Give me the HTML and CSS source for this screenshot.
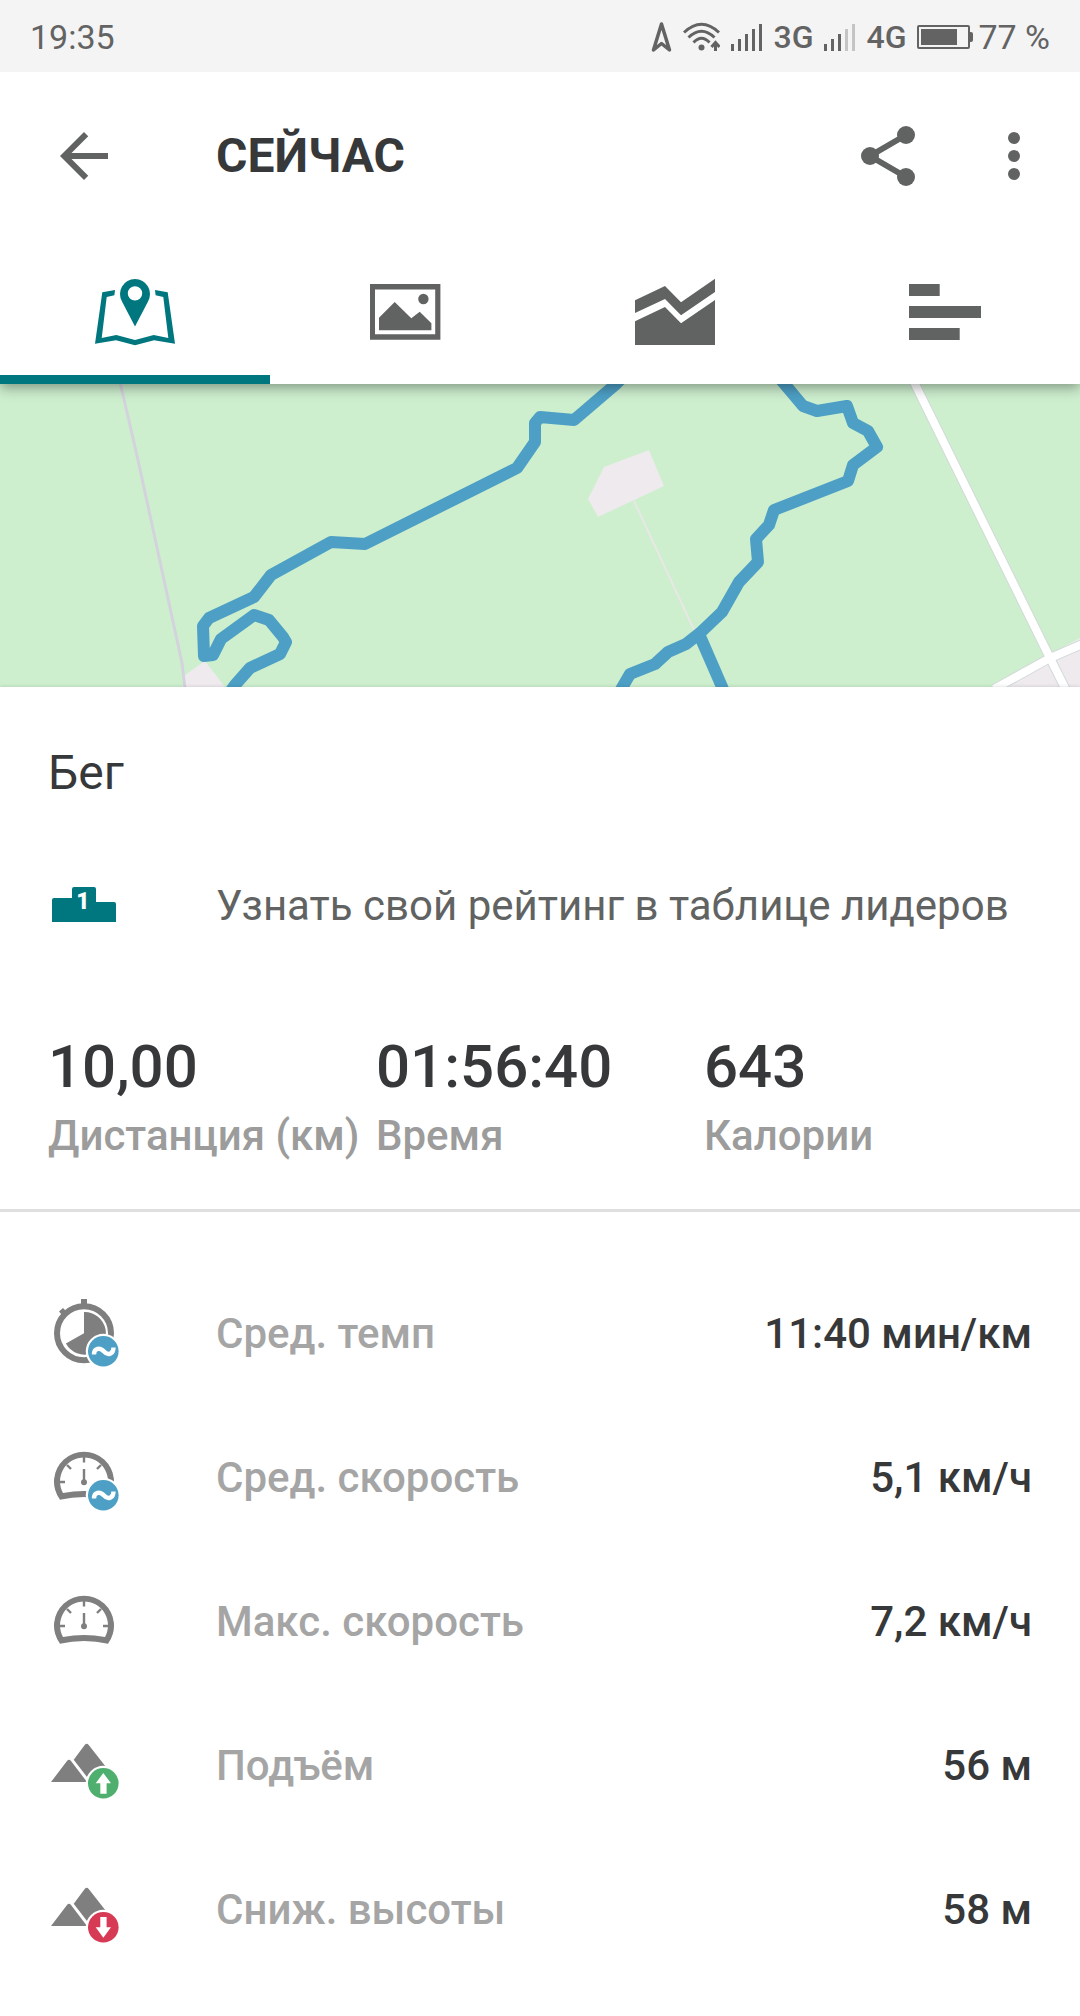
FILE: index.html
```html
<!DOCTYPE html>
<html lang="ru">
<head>
<meta charset="utf-8">
<meta name="viewport" content="width=device-width, initial-scale=1">
<title>Сейчас</title>
<link rel="stylesheet" href="styles.css">
</head>
<body>
<div class="status">
  <span class="status-text">19:35</span>
  <div class="status-icons">
    <svg width="21" height="32" viewBox="0 0 21 32" aria-hidden="true"><path d="M10.500 3L2.500 29 10.500 22.500 18.500 29Z" fill="none" stroke="currentColor" stroke-width="3.500" stroke-linejoin="round"/></svg>
    <svg width="37" height="30" viewBox="0 0 37 30" aria-hidden="true"><g fill="none" stroke="currentColor" stroke-width="3"><path d="M1 10.500Q18.500-6 36 10.500M5.500 15.500Q18.500 3 31.500 15.500M10.500 20.500Q18.500 12 26.500 20.500"/><path d="M32.500 29V21M28.500 25L32.500 20.500 36.500 25"/></g><circle cx="18.500" cy="25.500" r="3"/></svg>
    <svg width="31" height="28" viewBox="0 0 31 28" aria-hidden="true"><path d="M1.500 21V28M8.500 16V28M15.500 11V28M22.500 6V28M29.500 1V28" stroke="currentColor" stroke-width="3"/></svg>
    <span class="network">3G</span>
    <svg width="31" height="28" viewBox="0 0 31 28" aria-hidden="true"><path d="M1.500 21V28M8.500 16V28M15.500 11V28" stroke="currentColor" stroke-width="3"/><path d="M22.500 6V28M29.500 1V28" stroke="#c4c4c4" stroke-width="3"/></svg>
    <span class="network">4G</span>
    <div class="battery">
      <svg width="56" height="24" viewBox="0 0 56 24" aria-hidden="true"><rect x="1" y="1" width="51" height="22" rx="1" fill="none" stroke="currentColor" stroke-width="2"/><path d="M4 4H40V20H4ZM53 7H54Q56 7 56 9V15Q56 17 54 17H53Z"/></svg>
      <span class="status-text">77 %</span>
    </div>
  </div>
</div>

<header class="header">
  <div class="toolbar">
    <button class="icon-button" type="button" aria-label="Назад"><svg viewBox="0 0 24 24"><path d="M20 11H7.830L13.420 5.410 12 4 4 12 12 20 13.410 18.590 7.830 13H20Z"/></svg></button>
    <h1 class="title">СЕЙЧАС</h1>
    <button class="icon-button" type="button" aria-label="Поделиться"><svg viewBox="0 0 24 24"><path d="M18 5L6 12 18 19" fill="none" stroke="currentColor" stroke-width="2"/><circle cx="18" cy="5" r="3"/><circle cx="6" cy="12" r="3"/><circle cx="18" cy="19" r="3"/></svg></button>
    <button class="icon-button" type="button" aria-label="Ещё"><svg viewBox="0 0 24 24"><circle cx="12" cy="6" r="2"/><circle cx="12" cy="12" r="2"/><circle cx="12" cy="18" r="2"/></svg></button>
  </div>
  <nav class="tabs">
    <button class="tab tab-active" type="button" aria-label="Карта"><svg viewBox="0 0 96 96"><path d="M28 26L15.300 28.300 8 79.700 29 76.300 48 81.300 67 76.300 88 79.700 80.700 28.300 68 26 68.600 31.300 76.300 33 81.300 74 66.700 71 48 76 29.300 71 14.700 74 19.700 33 27.400 31.300Z"/><path fill-rule="evenodd" d="M48 62.500L35 37.500A15 15 0 1 1 61 37.500ZM48 22.200A7.200 7.200 0 1 0 48 36.600A7.200 7.200 0 1 0 48 22.200Z"/></svg></button>
    <button class="tab" type="button" aria-label="Фото"><svg viewBox="0 0 96 96"><path fill-rule="evenodd" d="M13 20H83.400V75.700H13ZM18 25.500V70.200H78.200V25.500Z"/><circle cx="66.400" cy="35" r="5.200"/><path d="M22 66.300V53.700L37.700 38 54.300 54.300 62.700 47.700 74.400 59.300V66.300Z"/></svg></button>
    <button class="tab" type="button" aria-label="Графики"><svg viewBox="0 0 96 96"><path d="M8 36.300L38 22 54 38.300 88 14.700V28L54 51.300 38 35 8 49Z"/><path d="M8 57.300L38 43 54 59.300 88 36V81H8Z"/></svg></button>
    <button class="tab" type="button" aria-label="Отрезки"><svg viewBox="0 0 96 96"><path d="M12 20H42.700V32H12ZM12 42H84V54H12ZM12 64H62.700V76H12Z"/></svg></button>
  </nav>
</header>

<main>
  <div class="map">
    <svg viewBox="0 0 1080 303" preserveAspectRatio="xMidYMid slice" role="img" aria-label="Маршрут тренировки">
      <path d="M0 0H1080V303H0Z" fill="#cdefce"/>
      <path d="M205 277L185 291 182 303H225Z" fill="#eeeaee"/>
      <path d="M120 -2L138 76 182 279 185 305" fill="none" stroke="#d4d3dd" stroke-width="3"/>
      <path d="M604 83L649 66 664 102 598 133 588 115Z" fill="#eeeaee"/>
      <path d="M634 117L695 248" stroke="#e8e8e4" stroke-width="2"/>
      <path d="M1050 270L1080 254V303H998Z" fill="#eeeaee"/>
      <g fill="none" stroke="#d3d9d9" stroke-width="10"><path d="M914 -2L1050 274 1066 306"/><path d="M1085 259L1050 274 994 305"/></g>
      <g fill="none" stroke="#fff" stroke-width="8"><path d="M914 -2L1050 274 1066 306"/><path d="M1085 259L1050 274 994 305"/></g>
      <g fill="none" stroke="#4d9fc5" stroke-width="12" stroke-linejoin="round">
        <path d="M622 -6L615 1 574 36 540 33 535 39V58L517 84 365 160 331 158 271 191 254 213 209 234 203 242 204 272 213 271 221 255 254 231 269 236 283 253 286 258 280 270 250 284 235 301 228 311"/>
        <path d="M777 -9L803 22 817 27 847 22 853 39 868 47 877 63 853 81 848 97 774 126 769 141 756 155 758 178 739 198 722 228 700 249 686 260 668 268 655 280 630 290 619 309"/>
        <path d="M699 250L726 312"/>
      </g>
    </svg>
  </div>

  <section class="summary">
    <h2 class="activity">Бег</h2>
    <a class="ranking" href="#leaderboard">
      <svg class="row-icon" viewBox="0 0 72 72" aria-hidden="true"><path d="M4 53V31Q4 29 6 29H24V20Q24 18 26 18H46Q48 18 48 20V33H66Q68 33 68 35V53Z" fill="#00767f"/><text x="35" y="40" text-anchor="middle" class="podium-digit">1</text></svg>
      <span>Узнать свой рейтинг в таблице лидеров</span>
    </a>
    <dl class="stats">
      <div class="stat"><dt>Дистанция (км)</dt><dd>10,00</dd></div>
      <div class="stat"><dt>Время</dt><dd>01:56:40</dd></div>
      <div class="stat"><dt>Калории</dt><dd>643</dd></div>
    </dl>
  </section>

  <dl class="details">
    <div class="detail">
      <dt><svg class="row-icon" viewBox="0 0 72 72" aria-hidden="true"><circle cx="36" cy="36.300" r="27" fill="none" stroke="currentColor" stroke-width="6"/><path d="M33 2H39V9H33ZM11 14.500L15 11 18 14 14 18ZM36 15A21.300 21.300 0 1 1 17.900 46.500L36 36.300Z"/><circle cx="55.300" cy="54.300" r="17.500" fill="#fff"/><circle cx="55.300" cy="54.300" r="15.300" fill="#4d9fc5"/><path d="M46 57.500C46 51 52 50 56 54.500S65.500 57 65.500 50.500" fill="none" stroke="#fff" stroke-width="4.400"/></svg>Сред. темп</dt>
      <dd>11:40 мин/км</dd>
    </div>
    <div class="detail">
      <dt><svg class="row-icon" viewBox="0 0 72 72" aria-hidden="true"><path fill-rule="evenodd" d="M12 58.700A30 30 0 1 1 60 58.700Q36 53.500 12 58.700ZM15 52Q36 48 57 52A24 24 0 1 0 15 52Z"/><path d="M36 16V21.500M11 41H17M55 41H61M19 24L23 28M53 24L49 28M36 28V41" fill="none" stroke="currentColor" stroke-width="2.400"/><circle cx="36" cy="41.300" r="3"/><circle cx="55.300" cy="54.300" r="17.500" fill="#fff"/><circle cx="55.300" cy="54.300" r="15.300" fill="#4d9fc5"/><path d="M46 57.500C46 51 52 50 56 54.500S65.500 57 65.500 50.500" fill="none" stroke="#fff" stroke-width="4.400"/></svg>Сред. скорость</dt>
      <dd>5,1 км/ч</dd>
    </div>
    <div class="detail">
      <dt><svg class="row-icon" viewBox="0 0 72 72" aria-hidden="true"><path fill-rule="evenodd" d="M12 58.700A30 30 0 1 1 60 58.700Q36 53.500 12 58.700ZM15 52Q36 48 57 52A24 24 0 1 0 15 52Z"/><path d="M36 16V21.500M11 41H17M55 41H61M19 24L23 28M53 24L49 28M36 28V41" fill="none" stroke="currentColor" stroke-width="2.400"/><circle cx="36" cy="41.300" r="3"/></svg>Макс. скорость</dt>
      <dd>7,2 км/ч</dd>
    </div>
    <div class="detail">
      <dt><svg class="row-icon" viewBox="0 0 72 72" aria-hidden="true"><path d="M3 53L19 32Q21 29.500 23 32L39 53ZM25.700 30.700L36.700 16Q38.700 13.300 40.700 16L58 38 39 48Z"/><circle cx="55.300" cy="54.300" r="17.500" fill="#fff"/><circle cx="55.300" cy="54.300" r="15.300" fill="#4faf6f"/><path d="M55.300 44L63 54.300H58.600V64.700H52.300V54.300H47.700Z" fill="#fff"/></svg>Подъём</dt>
      <dd>56 м</dd>
    </div>
    <div class="detail">
      <dt><svg class="row-icon" viewBox="0 0 72 72" aria-hidden="true"><path d="M3 53L19 32Q21 29.500 23 32L39 53ZM25.700 30.700L36.700 16Q38.700 13.300 40.700 16L58 38 39 48Z"/><circle cx="55.300" cy="54.300" r="17.500" fill="#fff"/><circle cx="55.300" cy="54.300" r="15.300" fill="#d73a54"/><path d="M55.300 64.700L63 54.300H58.600V44H52.300V54.300H47.700Z" fill="#fff"/></svg>Сниж. высоты</dt>
      <dd>58 м</dd>
    </div>
  </dl>
</main>
</body>
</html>
```

FILE: styles.css
```css
* {
  box-sizing: border-box;
}

body {
  margin: 0;
  background: #fff;
  color: #373839;
  font-family: Roboto, "Noto Sans", sans-serif;
  font-size: 42px;
}

h1,
h2,
dl,
dd {
  margin: 0;
}

svg {
  display: block;
  flex: none;
  fill: currentColor;
}

button {
  border: 0;
  padding: 0;
  background: none;
  color: #616362;
  font: inherit;
}

/* System status bar */
.status {
  display: flex;
  align-items: center;
  justify-content: space-between;
  height: 72px;
  padding: 2px 30px 0;
  background: #f4f4f4;
  color: #636363;
}

.status-icons {
  display: flex;
  align-items: center;
  gap: 11px;
}

.status-text {
  font-size: 34px;
  line-height: 40px;
}

.network {
  font-size: 32px;
  font-weight: 500;
  line-height: 40px;
}

.battery {
  display: flex;
  align-items: center;
  gap: 5px;
}

/* Header with tabs */
.header {
  position: relative;
  z-index: 1;
  background: #fff;
  box-shadow: 0 4px 12px rgba(0, 0, 0, 0.36);
  clip-path: inset(0 0 -24px);
}

.toolbar {
  display: flex;
  align-items: center;
  height: 168px;
  padding: 0 30px 0 48px;
}

.icon-button {
  width: 72px;
  height: 72px;
}

.icon-button + .icon-button {
  margin-left: 54px;
}

.title {
  flex: 1;
  padding-left: 96px;
  font-size: 48px;
  font-weight: 700;
  line-height: 72px;
}

.tabs {
  display: grid;
  grid-template-columns: repeat(4, 1fr);
}

.tab {
  display: flex;
  justify-content: center;
  padding: 24px 0 15px;
  border-bottom: 9px solid transparent;
}

.tab svg {
  width: 96px;
}

.tab-active {
  border-color: #00767f;
  color: #00767f;
}

/* Route map */
.map svg {
  width: 100%;
  height: 303px;
}

/* Workout summary */
.summary {
  position: relative;
  padding: 50px 48px 40px;
  border-bottom: 3px solid #dfdfdf;
  background: #fff;
  box-shadow: 0 0 4px rgba(0, 0, 0, 0.16);
  clip-path: inset(-8px 0 0);
}

.activity {
  font-size: 48px;
  font-weight: 400;
  line-height: 72px;
}

.ranking {
  display: flex;
  align-items: center;
  gap: 96px;
  height: 144px;
  margin: 24px 0 54px;
  color: #616362;
  text-decoration: none;
}

.row-icon {
  width: 72px;
  height: 72px;
  color: #7f7f7f;
}

.podium-digit {
  fill: #fff;
  font-size: 23px;
  font-weight: 900;
}

.stats {
  display: grid;
  grid-template-columns: repeat(3, 1fr);
}

.stat {
  display: flex;
  flex-direction: column-reverse;
  font-weight: 500;
  white-space: nowrap;
}

.stat dt {
  color: #9b9c9b;
  line-height: 66px;
}

.stat dd {
  font-size: 60px;
  line-height: 72px;
}

/* Metric rows */
.details {
  padding: 49px 48px 35px;
}

.detail {
  display: flex;
  align-items: center;
  justify-content: space-between;
  height: 144px;
  font-weight: 500;
}

.detail dt {
  display: flex;
  align-items: center;
  gap: 96px;
  color: #a5a5a5;
}
```
